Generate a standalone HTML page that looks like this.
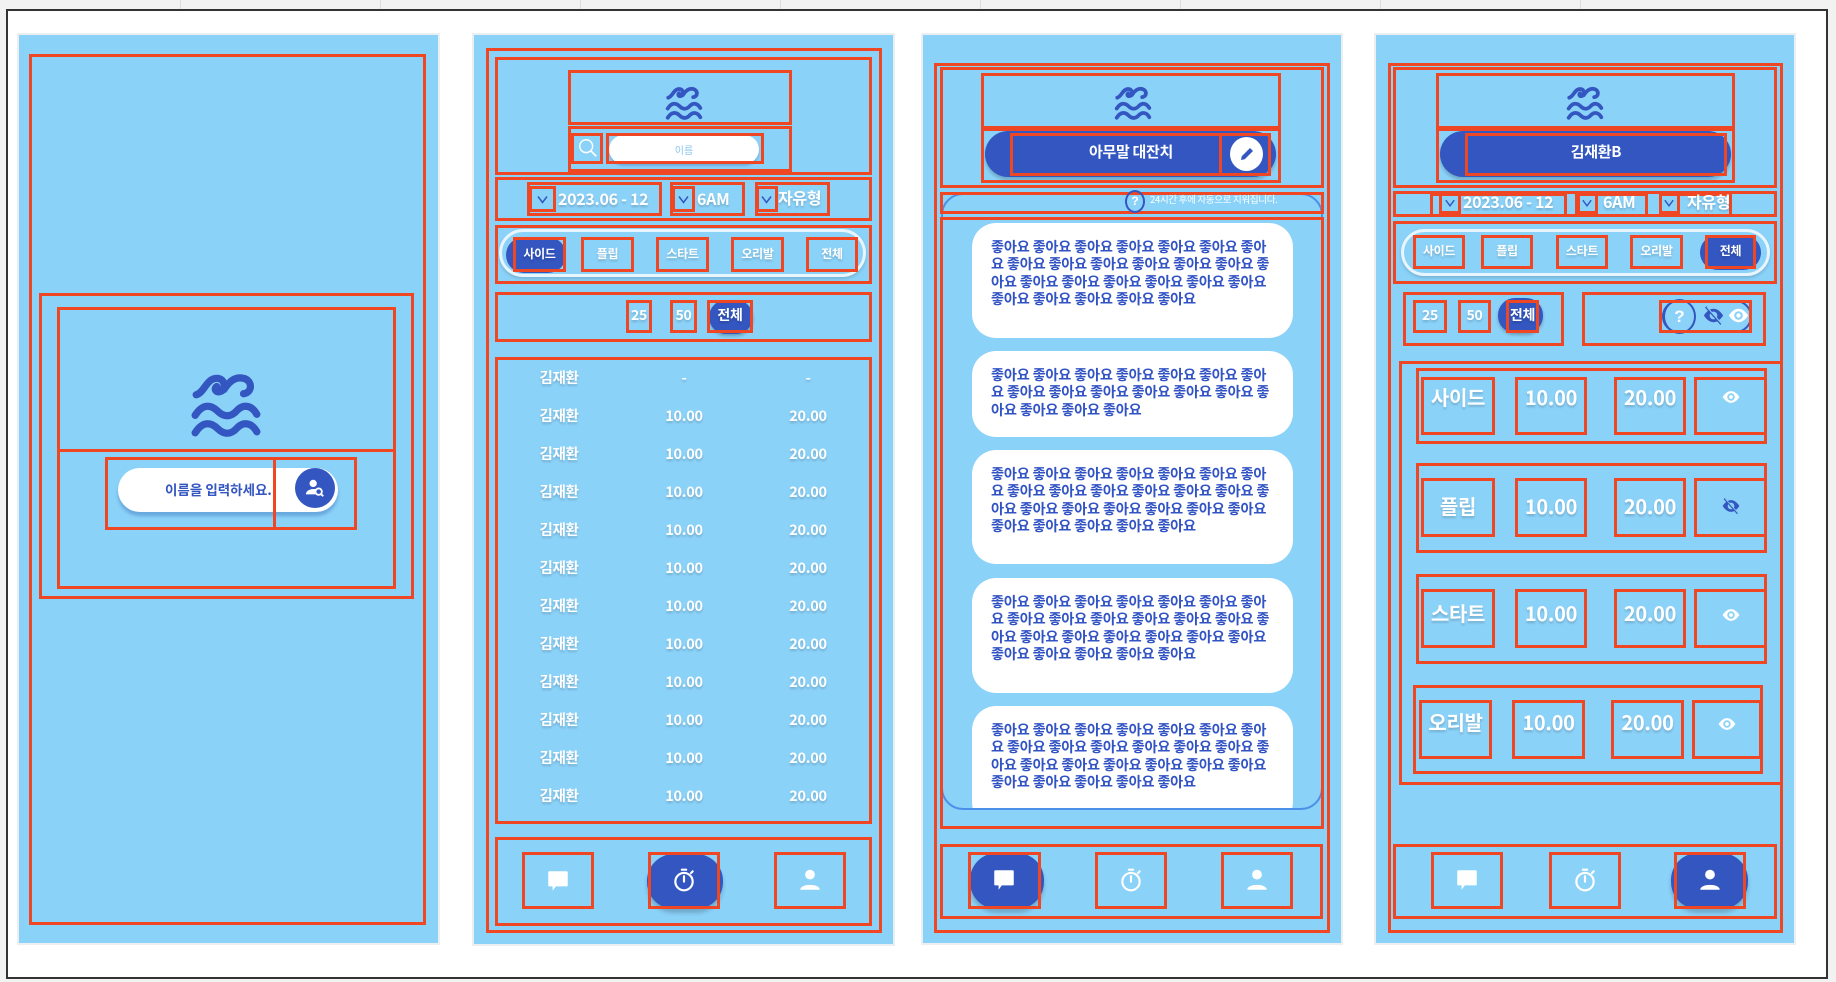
<!DOCTYPE html>
<html><head><meta charset="utf-8">
<style>
*{margin:0;padding:0;box-sizing:border-box}
body{width:1836px;height:982px;position:relative;overflow:hidden;background:#f2f2f2;font-family:"Liberation Sans","Noto Sans CJK KR",sans-serif}
.a{position:absolute}
.r{position:absolute;border:3px solid #ef4723}
.p{position:absolute;background:#8bd2f9;outline:2px solid #eceff1}
.t{position:absolute;color:#fff;text-align:center;text-shadow:0 2px 2px rgba(0,0,0,.18);white-space:nowrap;font-family:"Noto Sans CJK KR",sans-serif;font-weight:bold;line-height:1.25;letter-spacing:-0.3px}
.blue{background:#3356c0}
.card{position:absolute;left:972px;width:321px;background:#fff;border-radius:24px;padding:16px 20px 0 19px;color:#3153c4;font-weight:bold;font-size:14.2px;line-height:17.4px;word-break:break-all;letter-spacing:-0.2px;overflow:hidden;font-family:"Noto Sans CJK KR",sans-serif}
</style></head><body>
<div class="a" style="left:180px;top:0;width:1px;height:9px;background:#ddd"></div>
<div class="a" style="left:380px;top:0;width:1px;height:9px;background:#ddd"></div>
<div class="a" style="left:580px;top:0;width:1px;height:9px;background:#ddd"></div>
<div class="a" style="left:780px;top:0;width:1px;height:9px;background:#ddd"></div>
<div class="a" style="left:980px;top:0;width:1px;height:9px;background:#ddd"></div>
<div class="a" style="left:1180px;top:0;width:1px;height:9px;background:#ddd"></div>
<div class="a" style="left:1380px;top:0;width:1px;height:9px;background:#ddd"></div>
<div class="a" style="left:1580px;top:0;width:1px;height:9px;background:#ddd"></div>
<div class="a" style="left:6px;top:9px;width:1822px;height:970px;background:#fff;border:2px solid #333"></div>

<svg width="0" height="0" style="position:absolute">
<defs>
<symbol id="logo" viewBox="0 0 70 66"><g fill="none" stroke="#3356c0" stroke-width="7" stroke-linecap="round" stroke-linejoin="round">
<path d="M6,25 C14,23 16,9 26,9 C35,9 35,21 29,22 C25,23 23,19 26,17"/>
<path d="M33,20 C38,12 44,7 52,9 C61,11 61,23 52,24"/>
<path d="M5,45 C12,34 20,34 27,41 C33,47 40,47 46,40 C52,34 60,35 65,44"/>
<path d="M5,62 C12,51 20,51 27,58 C33,64 40,64 46,57 C52,51 60,52 65,61"/>
</g></symbol>
<symbol id="chat" viewBox="0 0 24 24"><path fill="#fff" d="M4,3 H20 A1,1 0 0 1 21,4 V16 A1,1 0 0 1 20,17 H10 L7,21 V17 H4 A1,1 0 0 1 3,16 V4 A1,1 0 0 1 4,3Z"/></symbol>
<symbol id="timer" viewBox="0 0 24 24"><g fill="none" stroke="#fff" stroke-width="2" stroke-linecap="round"><circle cx="12" cy="13.5" r="8"/><path d="M12,13.5 V8.5 M10,2.5 H14 M18.5,5.5 L20,4"/></g></symbol>
<symbol id="user" viewBox="0 0 24 24"><g fill="#fff"><circle cx="12" cy="7" r="4.5"/><path d="M3,21 C3,15 21,15 21,21Z"/></g></symbol>
<symbol id="eye" viewBox="0 0 24 24"><path fill="#fff" d="M12,5 C6,5 2,12 2,12 C2,12 6,19 12,19 C18,19 22,12 22,12 C22,12 18,5 12,5Z"/><circle cx="12" cy="12" r="4.5" fill="#8bd2f9"/><circle cx="12" cy="12" r="2.3" fill="#fff"/></symbol>
<symbol id="eyeoff" viewBox="0 0 24 24"><path fill="#3356c0" d="M12,5 C6,5 2,12 2,12 C2,12 6,19 12,19 C18,19 22,12 22,12 C22,12 18,5 12,5Z"/><circle cx="12" cy="12" r="4" fill="#8bd2f9"/><path d="M4,3 L20,21" stroke="#3356c0" stroke-width="2.2"/><path d="M5,3 L21,21" stroke="#8bd2f9" stroke-width="1"/></symbol>
<symbol id="chv" viewBox="0 0 10 10"><path d="M2,3 L5,7 L8,3" fill="none" stroke="#3356c0" stroke-width="1"/></symbol>
</defs></svg>

<!-- PANEL 1 -->
<div class="p" style="left:19px;top:35px;width:419px;height:908px"></div>
<div class="r" style="left:29px;top:54px;width:397px;height:871px"></div>
<div class="r" style="left:39px;top:293px;width:375px;height:306px"></div>
<div class="r" style="left:57px;top:307px;width:339px;height:282px"></div>
<div class="r" style="left:57px;top:449px;width:339px;height:6px;border-bottom:none"></div>
<svg class="a" style="left:190px;top:369px" width="72" height="68"><use href="#logo"/></svg>
<div class="a" style="left:118px;top:468px;width:220px;height:44px;background:#fff;border-radius:22px;box-shadow:0 4px 3px rgba(40,90,170,.35)"></div>
<div class="a" style="left:165px;top:479px;font-size:13.5px;font-weight:bold;color:#3356c0;font-family:'Noto Sans CJK KR',sans-serif">이름을 입력하세요.</div>
<div class="a blue" style="left:295px;top:468px;width:40px;height:40px;border-radius:50%"></div>
<svg class="a" style="left:304px;top:477px" width="22" height="22" viewBox="0 0 24 24"><circle cx="10" cy="7" r="4" fill="#fff"/><path d="M2,19 C2,13 12,12 14,14 L12,19Z" fill="#fff"/><circle cx="16" cy="16" r="3.5" fill="none" stroke="#fff" stroke-width="2"/><path d="M18.5,18.5 L21,21" stroke="#fff" stroke-width="2"/></svg>
<div class="r" style="left:105px;top:457px;width:252px;height:73px"></div>
<div class="r" style="left:273px;top:457px;width:3px;height:73px;border-right:none;border-top:none;border-bottom:none"></div>

<!-- PANEL 2 -->
<div class="p" style="left:474px;top:35px;width:419px;height:909px"></div>
<div class="r" style="left:486px;top:48px;width:396px;height:885px"></div>
<div class="r" style="left:495px;top:57px;width:377px;height:118px"></div>
<div class="r" style="left:568px;top:70px;width:224px;height:55px"></div>
<svg class="a" style="left:665px;top:84px" width="38" height="36"><use href="#logo"/></svg>
<div class="r" style="left:568px;top:126px;width:224px;height:46px"></div>
<svg class="a" style="left:577px;top:137px" width="22" height="22" viewBox="0 0 24 24"><circle cx="10" cy="10" r="7" fill="none" stroke="#fff" stroke-width="1.6"/><path d="M15,15 L21,21" stroke="#fff" stroke-width="1.8"/></svg>
<div class="r" style="left:571px;top:133px;width:32px;height:31px"></div>
<div class="a" style="left:609px;top:135px;width:150px;height:29px;background:#fff;border-radius:15px;box-shadow:0 2px 2px rgba(40,90,170,.3)"></div>
<div class="a" style="left:609px;top:142px;width:150px;text-align:center;font-size:10px;color:#8bc7ee">이름</div>
<div class="r" style="left:606px;top:133px;width:158px;height:31px"></div>
<div class="r" style="left:495px;top:177px;width:377px;height:44px"></div>
<div class="r" style="left:527px;top:182px;width:135px;height:34px"></div>
<div class="r" style="left:529px;top:186px;width:27px;height:26px"></div>
<svg class="a" style="left:535px;top:192px" width="15" height="15"><use href="#chv"/></svg>
<div class="t" style="left:558px;top:188px;font-size:16px">2023.06 - 12</div>
<div class="r" style="left:670px;top:182px;width:75px;height:34px"></div>
<div class="r" style="left:672px;top:186px;width:23px;height:26px"></div>
<svg class="a" style="left:676px;top:192px" width="15" height="15"><use href="#chv"/></svg>
<div class="t" style="left:697px;top:188px;font-size:16px">6AM</div>
<div class="r" style="left:755px;top:182px;width:75px;height:34px"></div>
<div class="r" style="left:756px;top:186px;width:22px;height:26px"></div>
<svg class="a" style="left:759px;top:192px" width="15" height="15"><use href="#chv"/></svg>
<div class="t" style="left:778px;top:187px;font-size:16px">자유형</div>
<div class="r" style="left:495px;top:225px;width:377px;height:59px"></div>
<div class="a" style="left:499px;top:229px;width:367px;height:48px;border:3px solid #e9f5fc;border-radius:26px;box-shadow:0 2px 3px rgba(0,0,0,.15)"></div>
<div class="a blue" style="left:506px;top:237px;width:60px;height:36px;border-radius:18px"></div>
<div class="r" style="left:513px;top:237px;width:53px;height:35px"></div>
<div class="t" style="left:513px;top:246px;width:53px;font-size:12px">사이드</div>
<div class="r" style="left:581px;top:237px;width:53px;height:35px"></div>
<div class="t" style="left:581px;top:246px;width:53px;font-size:12px">플립</div>
<div class="r" style="left:656px;top:237px;width:53px;height:35px"></div>
<div class="t" style="left:656px;top:246px;width:53px;font-size:12px">스타트</div>
<div class="r" style="left:731px;top:237px;width:53px;height:35px"></div>
<div class="t" style="left:731px;top:246px;width:53px;font-size:12px">오리발</div>
<div class="r" style="left:806px;top:237px;width:52px;height:35px"></div>
<div class="t" style="left:806px;top:246px;width:52px;font-size:12px">전체</div>
<div class="r" style="left:495px;top:292px;width:377px;height:50px"></div>
<div class="r" style="left:626px;top:300px;width:26px;height:33px"></div>
<div class="t" style="left:626px;top:307px;width:26px;font-size:14px">25</div>
<div class="r" style="left:670px;top:300px;width:27px;height:33px"></div>
<div class="t" style="left:670px;top:307px;width:27px;font-size:14px">50</div>
<div class="a blue" style="left:709px;top:300px;width:44px;height:34px;border-radius:17px;box-shadow:0 2px 3px rgba(0,0,0,.25)"></div>
<div class="r" style="left:707px;top:300px;width:46px;height:33px"></div>
<div class="t" style="left:707px;top:307px;width:46px;font-size:14px">전체</div>
<div class="r" style="left:495px;top:357px;width:377px;height:467px"></div>
<div class="r" style="left:495px;top:837px;width:377px;height:89px"></div>
<div class="r" style="left:522px;top:852px;width:72px;height:57px"></div>
<svg class="a" style="left:545px;top:868px" width="26" height="26"><use href="#chat"/></svg>
<div class="a blue" style="left:647px;top:854px;width:76px;height:55px;border-radius:27px;box-shadow:0 4px 4px rgba(0,0,0,.2)"></div>
<div class="r" style="left:648px;top:852px;width:72px;height:57px"></div>
<svg class="a" style="left:671px;top:867px" width="26" height="26"><use href="#timer"/></svg>
<div class="r" style="left:774px;top:852px;width:72px;height:57px"></div>
<svg class="a" style="left:797px;top:867px" width="26" height="26"><use href="#user"/></svg>

<!-- PANEL 3 -->
<div class="p" style="left:923px;top:35px;width:418px;height:908px"></div>
<div class="r" style="left:934px;top:63px;width:396px;height:870px"></div>
<div class="r" style="left:940px;top:67px;width:384px;height:121px"></div>
<div class="r" style="left:981px;top:73px;width:300px;height:56px"></div>
<svg class="a" style="left:1114px;top:84px" width="38" height="36"><use href="#logo"/></svg>
<div class="a blue" style="left:985px;top:131px;width:291px;height:46px;border-radius:23px;box-shadow:0 3px 3px rgba(0,0,0,.2)"></div>
<div class="r" style="left:981px;top:128px;width:300px;height:55px"></div>
<div class="r" style="left:1010px;top:133px;width:212px;height:43px"></div>
<div class="t" style="left:1010px;top:143px;width:242px;font-size:15px;text-shadow:none">아무말 대잔치</div>
<div class="r" style="left:1219px;top:133px;width:52px;height:43px"></div>
<div class="a" style="left:1230px;top:137px;width:33px;height:34px;border-radius:50%;background:#fff"></div>
<svg class="a" style="left:1238px;top:145px" width="18" height="18" viewBox="0 0 24 24"><path d="M4,20 L5,15 L16,4 L20,8 L9,19Z" fill="#3356c0"/></svg>
<div class="a" style="left:941px;top:193px;width:382px;height:617px;border:2px solid #4a8fe8;border-radius:22px"></div>
<div class="r" style="left:940px;top:192px;width:384px;height:22px"></div>
<div class="a" style="left:1125px;top:190px;width:20px;height:23px;border:2px solid #3356c0;border-radius:50%;color:#fff;font-size:12px;font-weight:bold;text-align:center;line-height:19px">?</div>
<div class="t" style="left:1150px;top:194px;font-size:9.5px;text-shadow:none;font-weight:normal">24시간 후에 자동으로 지워집니다.</div>
<div class="r" style="left:940px;top:217px;width:384px;height:612px"></div>
<div class="a" style="left:943px;top:218px;width:378px;height:590px;overflow:hidden;border-radius:0 0 20px 20px">
<div class="card" style="left:29px;top:5px;height:115px">좋아요 좋아요 좋아요 좋아요 좋아요 좋아요 좋아요 좋아요 좋아요 좋아요 좋아요 좋아요 좋아요 좋아요 좋아요 좋아요 좋아요 좋아요 좋아요 좋아요 좋아요 좋아요 좋아요 좋아요 좋아요</div>
<div class="card" style="left:29px;top:133px;height:86px">좋아요 좋아요 좋아요 좋아요 좋아요 좋아요 좋아요 좋아요 좋아요 좋아요 좋아요 좋아요 좋아요 좋아요 좋아요 좋아요 좋아요</div>
<div class="card" style="left:29px;top:232px;height:114px">좋아요 좋아요 좋아요 좋아요 좋아요 좋아요 좋아요 좋아요 좋아요 좋아요 좋아요 좋아요 좋아요 좋아요 좋아요 좋아요 좋아요 좋아요 좋아요 좋아요 좋아요 좋아요 좋아요 좋아요 좋아요</div>
<div class="card" style="left:29px;top:360px;height:115px">좋아요 좋아요 좋아요 좋아요 좋아요 좋아요 좋아요 좋아요 좋아요 좋아요 좋아요 좋아요 좋아요 좋아요 좋아요 좋아요 좋아요 좋아요 좋아요 좋아요 좋아요 좋아요 좋아요 좋아요 좋아요</div>
<div class="card" style="left:29px;top:488px;height:120px">좋아요 좋아요 좋아요 좋아요 좋아요 좋아요 좋아요 좋아요 좋아요 좋아요 좋아요 좋아요 좋아요 좋아요 좋아요 좋아요 좋아요 좋아요 좋아요 좋아요 좋아요 좋아요 좋아요 좋아요 좋아요</div>
</div>
<div class="r" style="left:940px;top:844px;width:383px;height:75px"></div>
<div class="a blue" style="left:970px;top:853px;width:74px;height:56px;border-radius:27px;box-shadow:0 4px 4px rgba(0,0,0,.2)"></div>
<div class="r" style="left:968px;top:852px;width:73px;height:57px"></div>
<svg class="a" style="left:991px;top:867px" width="26" height="26"><use href="#chat"/></svg>
<div class="r" style="left:1095px;top:852px;width:72px;height:57px"></div>
<svg class="a" style="left:1118px;top:867px" width="26" height="26"><use href="#timer"/></svg>
<div class="r" style="left:1221px;top:852px;width:72px;height:57px"></div>
<svg class="a" style="left:1244px;top:867px" width="26" height="26"><use href="#user"/></svg>

<!-- PANEL 4 -->
<div class="p" style="left:1376px;top:35px;width:418px;height:908px"></div>
<div class="r" style="left:1388px;top:63px;width:395px;height:870px"></div>
<div class="r" style="left:1393px;top:67px;width:384px;height:121px"></div>
<div class="r" style="left:1436px;top:73px;width:299px;height:56px"></div>
<svg class="a" style="left:1566px;top:84px" width="38" height="36"><use href="#logo"/></svg>
<div class="a blue" style="left:1440px;top:131px;width:291px;height:46px;border-radius:23px;box-shadow:0 3px 3px rgba(0,0,0,.2)"></div>
<div class="r" style="left:1436px;top:128px;width:299px;height:55px"></div>
<div class="r" style="left:1465px;top:133px;width:262px;height:43px"></div>
<div class="t" style="left:1465px;top:143px;width:262px;font-size:15px;text-shadow:none">김재환B</div>
<div class="r" style="left:1393px;top:191px;width:384px;height:26px"></div>
<div class="r" style="left:1430px;top:193px;width:137px;height:24px"></div>
<svg class="a" style="left:1443px;top:196px" width="14" height="14"><use href="#chv"/></svg>
<div class="r" style="left:1439px;top:193px;width:22px;height:21px"></div>
<div class="t" style="left:1463px;top:191px;font-size:16px">2023.06 - 12</div>
<div class="r" style="left:1575px;top:193px;width:73px;height:24px"></div>
<div class="r" style="left:1577px;top:193px;width:21px;height:21px"></div>
<svg class="a" style="left:1580px;top:196px" width="14" height="14"><use href="#chv"/></svg>
<div class="t" style="left:1603px;top:191px;font-size:16px">6AM</div>
<div class="r" style="left:1659px;top:193px;width:73px;height:24px"></div>
<div class="r" style="left:1659px;top:193px;width:21px;height:21px"></div>
<svg class="a" style="left:1662px;top:196px" width="14" height="14"><use href="#chv"/></svg>
<div class="t" style="left:1687px;top:191px;font-size:16px">자유형</div>
<div class="r" style="left:1393px;top:221px;width:384px;height:63px"></div>
<div class="a" style="left:1401px;top:229px;width:369px;height:47px;border:3px solid #e9f5fc;border-radius:26px;box-shadow:0 2px 3px rgba(0,0,0,.15)"></div>
<div class="r" style="left:1413px;top:235px;width:52px;height:34px"></div>
<div class="t" style="left:1413px;top:243px;width:52px;font-size:12px">사이드</div>
<div class="r" style="left:1481px;top:235px;width:52px;height:34px"></div>
<div class="t" style="left:1481px;top:243px;width:52px;font-size:12px">플립</div>
<div class="r" style="left:1556px;top:235px;width:52px;height:34px"></div>
<div class="t" style="left:1556px;top:243px;width:52px;font-size:12px">스타트</div>
<div class="r" style="left:1630px;top:235px;width:53px;height:34px"></div>
<div class="t" style="left:1630px;top:243px;width:53px;font-size:12px">오리발</div>
<div class="a blue" style="left:1700px;top:235px;width:61px;height:35px;border-radius:18px"></div>
<div class="r" style="left:1705px;top:235px;width:51px;height:34px"></div>
<div class="t" style="left:1705px;top:243px;width:51px;font-size:12px">전체</div>
<div class="r" style="left:1403px;top:292px;width:161px;height:54px"></div>
<div class="r" style="left:1413px;top:300px;width:34px;height:33px"></div>
<div class="t" style="left:1413px;top:307px;width:34px;font-size:14px">25</div>
<div class="r" style="left:1458px;top:300px;width:33px;height:33px"></div>
<div class="t" style="left:1458px;top:307px;width:33px;font-size:14px">50</div>
<div class="a blue" style="left:1498px;top:298px;width:45px;height:35px;border-radius:17px;box-shadow:0 2px 3px rgba(0,0,0,.25)"></div>
<div class="r" style="left:1506px;top:300px;width:33px;height:33px"></div>
<div class="t" style="left:1500px;top:307px;width:45px;font-size:14px">전체</div>
<div class="r" style="left:1582px;top:292px;width:184px;height:54px"></div>
<div class="a" style="left:1662px;top:300px;width:90px;height:33px;border:2px solid #3356c0;border-radius:17px"></div>
<div class="a" style="left:1663px;top:299px;width:33px;height:35px;border:2px solid #3356c0;border-radius:50%;color:#fff;font-weight:bold;font-size:17px;text-align:center;line-height:31px">?</div>
<svg class="a" style="left:1702px;top:304px" width="23" height="23"><use href="#eyeoff"/></svg>
<svg class="a" style="left:1727px;top:304px" width="23" height="23"><use href="#eye"/></svg>
<div class="r" style="left:1659px;top:300px;width:93px;height:33px"></div>
<div class="r" style="left:1399px;top:361px;width:384px;height:424px"></div>
<div class="r" style="left:1393px;top:844px;width:384px;height:75px"></div>
<div class="r" style="left:1431px;top:852px;width:72px;height:57px"></div>
<svg class="a" style="left:1454px;top:867px" width="26" height="26"><use href="#chat"/></svg>
<div class="r" style="left:1549px;top:852px;width:72px;height:57px"></div>
<svg class="a" style="left:1572px;top:867px" width="26" height="26"><use href="#timer"/></svg>
<div class="a blue" style="left:1671px;top:853px;width:77px;height:56px;border-radius:27px;box-shadow:0 4px 4px rgba(0,0,0,.2)"></div>
<div class="r" style="left:1674px;top:852px;width:72px;height:57px"></div>
<svg class="a" style="left:1697px;top:867px" width="26" height="26"><use href="#user"/></svg>

<!-- Panel 2 list rows -->
<div class="t" style="left:519px;top:369px;width:80px;font-size:14.5px">김재환</div><div class="t" style="left:644px;top:369px;width:80px;font-size:14.5px">-</div><div class="t" style="left:768px;top:369px;width:80px;font-size:14.5px">-</div>
<div class="t" style="left:519px;top:407px;width:80px;font-size:14.5px">김재환</div><div class="t" style="left:644px;top:407px;width:80px;font-size:14.5px">10.00</div><div class="t" style="left:768px;top:407px;width:80px;font-size:14.5px">20.00</div>
<div class="t" style="left:519px;top:445px;width:80px;font-size:14.5px">김재환</div><div class="t" style="left:644px;top:445px;width:80px;font-size:14.5px">10.00</div><div class="t" style="left:768px;top:445px;width:80px;font-size:14.5px">20.00</div>
<div class="t" style="left:519px;top:483px;width:80px;font-size:14.5px">김재환</div><div class="t" style="left:644px;top:483px;width:80px;font-size:14.5px">10.00</div><div class="t" style="left:768px;top:483px;width:80px;font-size:14.5px">20.00</div>
<div class="t" style="left:519px;top:521px;width:80px;font-size:14.5px">김재환</div><div class="t" style="left:644px;top:521px;width:80px;font-size:14.5px">10.00</div><div class="t" style="left:768px;top:521px;width:80px;font-size:14.5px">20.00</div>
<div class="t" style="left:519px;top:559px;width:80px;font-size:14.5px">김재환</div><div class="t" style="left:644px;top:559px;width:80px;font-size:14.5px">10.00</div><div class="t" style="left:768px;top:559px;width:80px;font-size:14.5px">20.00</div>
<div class="t" style="left:519px;top:597px;width:80px;font-size:14.5px">김재환</div><div class="t" style="left:644px;top:597px;width:80px;font-size:14.5px">10.00</div><div class="t" style="left:768px;top:597px;width:80px;font-size:14.5px">20.00</div>
<div class="t" style="left:519px;top:635px;width:80px;font-size:14.5px">김재환</div><div class="t" style="left:644px;top:635px;width:80px;font-size:14.5px">10.00</div><div class="t" style="left:768px;top:635px;width:80px;font-size:14.5px">20.00</div>
<div class="t" style="left:519px;top:673px;width:80px;font-size:14.5px">김재환</div><div class="t" style="left:644px;top:673px;width:80px;font-size:14.5px">10.00</div><div class="t" style="left:768px;top:673px;width:80px;font-size:14.5px">20.00</div>
<div class="t" style="left:519px;top:711px;width:80px;font-size:14.5px">김재환</div><div class="t" style="left:644px;top:711px;width:80px;font-size:14.5px">10.00</div><div class="t" style="left:768px;top:711px;width:80px;font-size:14.5px">20.00</div>
<div class="t" style="left:519px;top:749px;width:80px;font-size:14.5px">김재환</div><div class="t" style="left:644px;top:749px;width:80px;font-size:14.5px">10.00</div><div class="t" style="left:768px;top:749px;width:80px;font-size:14.5px">20.00</div>
<div class="t" style="left:519px;top:787px;width:80px;font-size:14.5px">김재환</div><div class="t" style="left:644px;top:787px;width:80px;font-size:14.5px">10.00</div><div class="t" style="left:768px;top:787px;width:80px;font-size:14.5px">20.00</div>

<!-- Panel 4 table rows -->
<div class="r" style="left:1416px;top:368px;width:351px;height:76px"></div>
<div class="r" style="left:1421px;top:377px;width:74px;height:58px"></div><div class="t" style="left:1421px;top:384px;width:74px;font-size:20px">사이드</div>
<div class="r" style="left:1515px;top:377px;width:72px;height:58px"></div><div class="t" style="left:1515px;top:384px;width:72px;font-size:20px">10.00</div>
<div class="r" style="left:1614px;top:377px;width:72px;height:58px"></div><div class="t" style="left:1614px;top:384px;width:72px;font-size:20px">20.00</div>
<div class="r" style="left:1694px;top:377px;width:73px;height:58px"></div><svg class="a" style="left:1721px;top:387px" width="20" height="20"><use href="#eye"/></svg>

<div class="r" style="left:1416px;top:463px;width:351px;height:90px"></div>
<div class="r" style="left:1421px;top:478px;width:74px;height:59px"></div><div class="t" style="left:1421px;top:493px;width:74px;font-size:20px">플립</div>
<div class="r" style="left:1515px;top:478px;width:72px;height:59px"></div><div class="t" style="left:1515px;top:493px;width:72px;font-size:20px">10.00</div>
<div class="r" style="left:1614px;top:478px;width:72px;height:59px"></div><div class="t" style="left:1614px;top:493px;width:72px;font-size:20px">20.00</div>
<div class="r" style="left:1694px;top:478px;width:73px;height:59px"></div><svg class="a" style="left:1721px;top:496px" width="20" height="20"><use href="#eyeoff"/></svg>

<div class="r" style="left:1416px;top:574px;width:351px;height:90px"></div>
<div class="r" style="left:1421px;top:589px;width:74px;height:59px"></div><div class="t" style="left:1421px;top:600px;width:74px;font-size:20px">스타트</div>
<div class="r" style="left:1515px;top:589px;width:72px;height:59px"></div><div class="t" style="left:1515px;top:600px;width:72px;font-size:20px">10.00</div>
<div class="r" style="left:1614px;top:589px;width:72px;height:59px"></div><div class="t" style="left:1614px;top:600px;width:72px;font-size:20px">20.00</div>
<div class="r" style="left:1694px;top:589px;width:73px;height:59px"></div><svg class="a" style="left:1721px;top:605px" width="20" height="20"><use href="#eye"/></svg>

<div class="r" style="left:1413px;top:685px;width:350px;height:89px"></div>
<div class="r" style="left:1419px;top:700px;width:73px;height:59px"></div><div class="t" style="left:1419px;top:709px;width:73px;font-size:20px">오리발</div>
<div class="r" style="left:1512px;top:700px;width:73px;height:59px"></div><div class="t" style="left:1512px;top:709px;width:73px;font-size:20px">10.00</div>
<div class="r" style="left:1611px;top:700px;width:73px;height:59px"></div><div class="t" style="left:1611px;top:709px;width:73px;font-size:20px">20.00</div>
<div class="r" style="left:1692px;top:700px;width:70px;height:59px"></div><svg class="a" style="left:1717px;top:714px" width="20" height="20"><use href="#eye"/></svg>
</body></html>
